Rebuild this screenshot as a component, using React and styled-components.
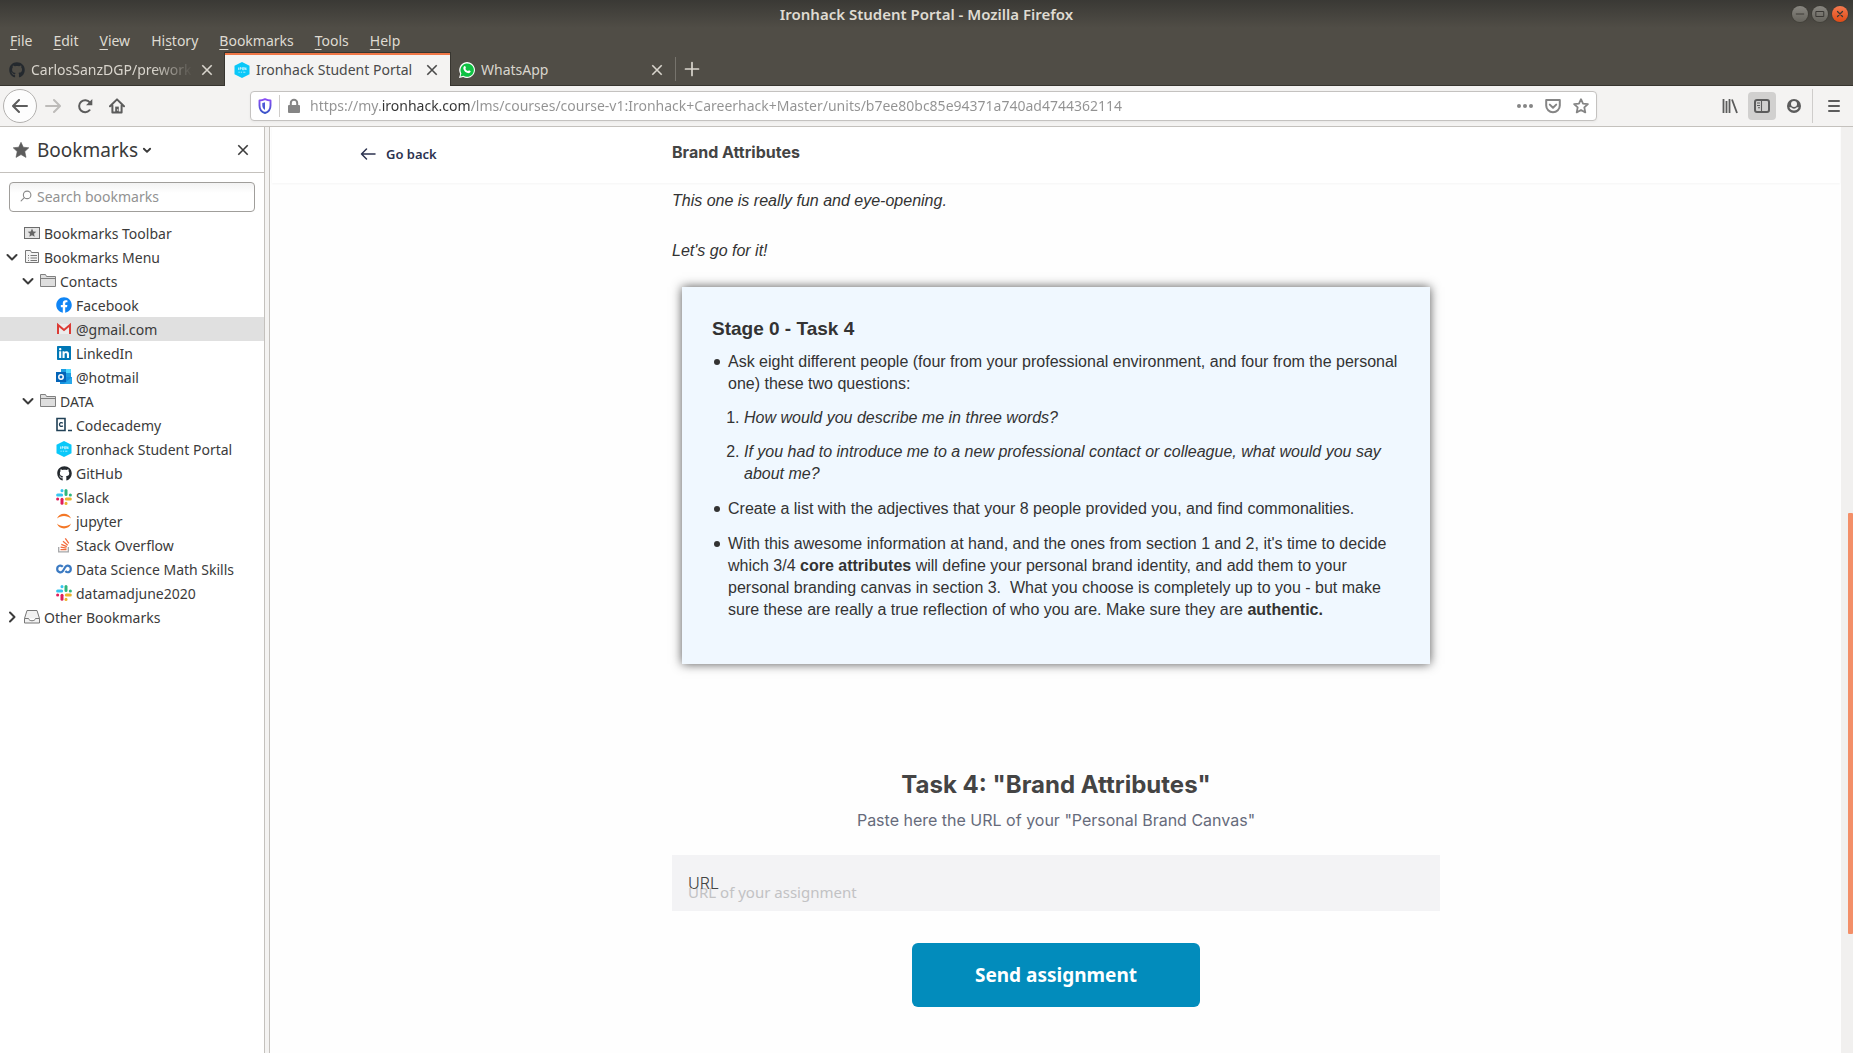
import React from "react";
import styled, { createGlobalStyle, css } from "styled-components";
import { FaGithub, FaFacebook, FaLinkedin } from "react-icons/fa";

const ui = `"Noto Sans", "Open Sans", sans-serif`;
const arial = `"Liberation Sans", Arial, sans-serif`;
const inter = `Inter, "Open Sans", sans-serif`;

const GlobalStyle = createGlobalStyle`
  *, *::before, *::after { box-sizing: border-box; }
  body { margin: 0; background: #fefefe; font-family: ${ui}; font-size: 14px; color: #3b3b3b; }
  button { font: inherit; color: inherit; background: none; border: 0; padding: 0; cursor: pointer; }
  a { color: inherit; text-decoration: none; }
  ul, ol { margin: 0; padding: 0; }
  svg { display: block; flex: none; }
`;

const Window = styled.div`
  display: flex;
  flex-direction: column;
  min-height: 100vh;
`;

const TitleBar = styled.header`
  display: grid;
  grid-template-columns: 1fr auto 1fr;
  align-items: center;
  height: 28px;
  padding: 0 5px;
  background: linear-gradient(#3a3935, #504d46);
  color: #dfdbd2;
`;

const WindowTitle = styled.h1`
  grid-column: 2;
  margin: 0;
  font-size: 15px;
  line-height: 20px;
  font-weight: 600;
`;

const WindowButtons = styled.div`
  display: flex;
  justify-content: flex-end;
  gap: 4px;
`;

const WindowButton = styled.button`
  display: grid;
  place-items: center;
  width: 16px;
  height: 16px;
  border-radius: 50%;
  color: #3a3834;
  box-shadow: 0 0 0 1px #38362f66;
  background: ${(p) => (p.$close ? "linear-gradient(#f4794f, #df4b16)" : "linear-gradient(#888680, #66645d)")};
`;

const MenuBar = styled.nav`
  display: flex;
  height: 25px;
  background: #504d46;
  color: #dfdbd2;
`;

const MenuItem = styled.button`
  padding: 0 11px 0 10px;
  line-height: 24px;
  u { text-underline-offset: 3px; }
`;

const TabStrip = styled.div`
  display: flex;
  height: 33px;
  background: #504d46;
  box-shadow: inset 0 -1px #37352f;
  color: #d9d5cd;
`;

const Tab = styled.div`
  display: flex;
  align-items: center;
  gap: 6px;
  width: 225px;
  padding: 0 10px 0 9px;
  ${(p) =>
    p.$active &&
    css`
      padding-bottom: 2px;
      background: #f4f3f2;
      color: #4a4a4a;
      border-top: 2px solid #f07746;
      box-shadow: 0 0 0 1px #37352f;
      clip-path: inset(-1px -1px 0 -1px);
    `}
`;

const TabLabel = styled.button`
  flex: 1;
  min-width: 0;
  overflow: hidden;
  white-space: nowrap;
  text-align: left;
  line-height: 24px;
  ${(p) => p.$fade && css`mask-image: linear-gradient(to right, #000 75%, transparent);`}
`;

const IconButton = styled.button`
  display: grid;
  place-items: center;
  flex: none;
  width: ${(p) => p.$size || 16}px;
  height: ${(p) => p.$size || 16}px;
  border-radius: 4px;
  background: ${(p) => (p.$on ? "#d1d0cf" : "none")};
`;

const NewTab = styled.button`
  display: grid;
  place-items: center;
  width: 33px;
  height: 24px;
  margin-top: 4px;
  border-left: 1px solid #76736c;
`;

const Toolbar = styled.div`
  display: flex;
  align-items: center;
  justify-content: space-between;
  height: 41px;
  padding: 0 5px 0 3px;
  background: #f4f3f2;
  border-bottom: 1px solid #c4c1bd;
  color: #5c5c5c;
`;

const ToolGroup = styled.div`
  display: flex;
  align-items: center;
  gap: 4px;
`;

const BackButton = styled.button`
  display: grid;
  place-items: center;
  width: 34px;
  height: 34px;
  margin-right: -2px;
  border: 1px solid #b3b1af;
  border-radius: 50%;
  background: #fdfdfd;
`;

const UrlBar = styled.form`
  display: flex;
  align-items: center;
  flex: 1;
  gap: 8px;
  height: 30px;
  margin: 0 119px;
  padding: 0 7px 0 6px;
  border: 1px solid #c4c2c0;
  border-radius: 4px;
  background: #fff;
  box-shadow: 0 1px 3px #0000000d;
  color: #858585;
`;

const Identity = styled.div`
  display: flex;
  align-items: center;
  gap: 6px;
`;

const PageActions = styled.div`
  display: flex;
  align-items: center;
  gap: 12px;
`;

const ThinRule = styled.span`
  width: 1px;
  height: ${(p) => p.$height}px;
  background: #cfcdcb;
`;

const MenuGroup = styled.div`
  display: flex;
  align-items: center;
  gap: 7px;
`;

const UrlInput = styled.input`
  flex: 1;
  min-width: 0;
  border: 0;
  padding: 0;
  outline: none;
  font-family: ${ui};
  font-size: 14px;
  line-height: 24px;
  color: transparent;
  caret-color: #333;
  background: linear-gradient(to right, #929292 72px, #333 72px 161px, #929292 161px);
  background-clip: text;
`;

const Body = styled.div`
  display: flex;
  flex: 1;
`;

const Sidebar = styled.aside`
  width: 265px;
  flex: none;
  background: #fff;
  border-right: 1px solid #c4c1bd;
`;

const SidebarHeader = styled.div`
  display: flex;
  align-items: center;
  justify-content: space-between;
  height: 46px;
  padding: 0 13px;
  border-bottom: 1px solid #c4c1bd;
`;

const SidebarSwitch = styled.button`
  display: flex;
  align-items: center;
  gap: 8px;
  font-size: 19px;
  line-height: 24px;
  color: #3a3a3a;
  svg:last-child { margin-left: -4px; }
`;

const SearchBox = styled.label`
  display: flex;
  align-items: center;
  gap: 5px;
  height: 30px;
  margin: 9px;
  padding: 0 10px 2px;
  border: 1px solid #a09e9b;
  border-radius: 4px;
  background: linear-gradient(#f3f3f3, #fff 10px);
  color: #8b8b8b;
  input {
    flex: 1;
    min-width: 0;
    border: 0;
    padding: 0;
    outline: none;
    background: none;
    font-family: ${ui};
    font-size: 14px;
    color: #333;
  }
  input::placeholder { color: #929292; opacity: 1; }
`;

const Tree = styled.ul`
  list-style: none;
`;

const rowStyle = css`
  display: flex;
  align-items: center;
  gap: 4px;
  width: 100%;
  height: 24px;
  padding-left: ${(p) => 4 + p.$level * 16}px;
  background: ${(p) => (p.$selected ? "#e0e0e0" : "transparent")};
  white-space: nowrap;
`;

const FolderRow = styled.button`${rowStyle}`;
const LinkRow = styled.a`${rowStyle}`;

const Slot = styled.span`
  display: grid;
  place-items: center;
  width: 16px;
  height: 16px;
  flex: none;
`;

const Splitter = styled.div`
  width: 5px;
  flex: none;
  background: #f4f3f2;
  border-right: 1px solid #c4c1bd;
`;

const Page = styled.main`
  flex: 1;
  min-width: 0;
  padding: 0 1px 0 2px;
  background: #fefefe;
`;

const PageHeader = styled.div`
  display: grid;
  grid-template-columns: 1fr minmax(0, 768px) 1fr;
  align-items: center;
  height: 56px;
  padding-bottom: 6px;
  background: #fff;
  box-shadow: 0 1px 2px #0000000a;
`;

const GoBack = styled.a`
  display: flex;
  align-items: center;
  gap: 10px;
  margin-left: 88px;
  padding-top: 3px;
  font-size: 13px;
  line-height: 24px;
  font-weight: 600;
  color: #2c3350;
`;

const PageTitle = styled.h2`
  margin: 0;
  font-family: ${inter};
  font-size: 16px;
  line-height: 24px;
  color: #444;
`;

const Column = styled.div`
  width: 100%;
  max-width: 768px;
  margin: 0 auto;
  padding-top: 7px;
  font-family: ${arial};
  font-size: 16px;
  line-height: 22px;
  color: #333;
`;

const Intro = styled.p`
  margin: 0;
  font-style: italic;
  & + & { margin-top: 28px; }
`;

const Card = styled.section`
  margin: 25px 10px 0;
  padding: 30px;
  background: #f0f8ff;
  box-shadow: 0 0 10px #555;
`;

const CardTitle = styled.h3`
  margin: 0 0 10px;
  font-size: 19px;
  line-height: 24px;
`;

const Bullets = styled.ul`
  padding-left: 16px;
  list-style: none;
  > li { margin-bottom: 13px; }
  > li::before {
    content: "";
    display: inline-block;
    width: 6px;
    height: 6px;
    margin: 0 8px 0 -14px;
    border-radius: 50%;
    background: #333;
    vertical-align: 2px;
  }
`;

const Questions = styled.ol`
  padding-left: 16px;
  font-style: italic;
  list-style: decimal;
  > li { margin-top: 12px; }
  > li::marker { font-style: normal; }
`;

const Assignment = styled.form`
  display: flex;
  flex-direction: column;
  align-items: center;
  margin-top: 105px;
  font-family: ${inter};
`;

const TaskTitle = styled.h2`
  margin: 0;
  font-size: 24px;
  line-height: 32px;
  color: #444;
`;

const TaskHint = styled.p`
  margin: 7px 0 23px;
  line-height: 24px;
  color: #666b7b;
`;

const Field = styled.div`
  position: relative;
  width: 100%;
  margin-bottom: 32px;
`;

const FieldLabel = styled.label`
  position: absolute;
  left: 16px;
  top: 16px;
  line-height: 24px;
  font-weight: 300;
  color: #444;
`;

const FieldInput = styled.input`
  display: block;
  width: 100%;
  height: 56px;
  padding: 18px 16px 0;
  border: 0;
  background: #f3f3f5;
  font-family: ${ui};
  font-size: 15px;
  color: #444;
  &::placeholder { color: #c2c2c4; opacity: 1; }
`;

const SendButton = styled.button`
  width: 288px;
  max-width: 100%;
  height: 64px;
  border-radius: 6px;
  background: #028cbc;
  color: #fff;
  font-family: ${ui};
  font-size: 19px;
  line-height: 28px;
  font-weight: 700;
`;

const ScrollTrack = styled.div`
  display: flex;
  flex-direction: column;
  align-items: flex-end;
  width: 12px;
  flex: none;
  background: #f1f0ef;
`;

const ScrollGap = styled.div`
  flex: ${(p) => p.$share};
`;

const ScrollThumb = styled.div`
  flex: 421;
  width: 5px;
  border-radius: 1px;
  background: #f38f68;
`;

const Stroke = ({ size = 16, w = 2, children, ...rest }) => (
  <svg width={size} height={size} viewBox="0 0 16 16" fill="none" stroke="currentColor" strokeWidth={w} strokeLinecap="round" strokeLinejoin="round" aria-hidden="true" {...rest}>
    {children}
  </svg>
);

const Cross = ({ size = 16 }) => <Stroke size={size} w={1.6} strokeLinecap="butt"><path d="M3.3 3.3l9.4 9.4M12.7 3.3l-9.4 9.4" /></Stroke>;
const ArrowLeft = () => <Stroke><path d="M15 8H1.5M7 2L1 8l6 6" /></Stroke>;
const ArrowRight = () => <Stroke stroke="#bdbbb9"><path d="M1 8h13.5M9 2l6 6-6 6" /></Stroke>;
const ThinArrow = () => <Stroke w={1.5}><path d="M15 8H1.5M6.5 3l-5 5 5 5" /></Stroke>;
const Reload = () => (
  <svg width="16" height="16" viewBox="0 0 16 16" aria-hidden="true">
    <path d="M12.6 12.2A6 6 0 1 1 12.8 4.4" fill="none" stroke="currentColor" strokeWidth="2" strokeLinecap="round" />
    <path d="M15.3 1v6.3H9z" fill="currentColor" />
  </svg>
);
const Home = () => (
  <svg width="16" height="16" viewBox="0 0 16 16" aria-hidden="true">
    <path d="M1 8.2L8 1.4l7 6.8M3.4 7.5v7h9.2v-7" fill="none" stroke="currentColor" strokeWidth="2" strokeLinecap="round" strokeLinejoin="round" />
    <path d="M6.2 14.5V8.6h3.6v5.9z" fill="currentColor" /><circle cx="8.6" cy="12" r=".8" fill="#f4f3f2" />
  </svg>
);
const Shield = () => (
  <svg width="16" height="16" viewBox="0 0 16 16" aria-hidden="true">
    <defs><linearGradient id="shield" x1="0" y1="0" x2="0" y2="1"><stop offset="0" stopColor="#8a4df5" /><stop offset="1" stopColor="#3a55c8" /></linearGradient></defs>
    <path d="M8 1.2C6 2.1 4 2.5 2.5 2.5v5c0 4.2 2.8 6.7 5.5 7.5 2.7-.8 5.5-3.3 5.5-7.5v-5C12 2.5 10 2.1 8 1.2z" fill="none" stroke="url(#shield)" strokeWidth="1.9" strokeLinejoin="round" />
    <path d="M8 4.3C7 4.7 6 5 5.3 5.1v2.5c0 2.3 1.3 3.7 2.7 4.4z" fill="#4c57d6" />
  </svg>
);
const Lock = () => (
  <svg width="16" height="16" viewBox="0 0 16 16" aria-hidden="true">
    <rect x="2" y="7" width="12" height="8" rx="1" fill="currentColor" />
    <path d="M4.8 7.5V5a3.2 3.2 0 0 1 6.400 0v2.500" fill="none" stroke="currentColor" strokeWidth="2" />
  </svg>
);
const Dots = () => <svg width="16" height="16" viewBox="0 0 16 16" fill="currentColor" aria-hidden="true"><circle cx="2" cy="8" r="2" /><circle cx="8" cy="8" r="2" /><circle cx="14" cy="8" r="2" /></svg>;
const Pocket = () => <Stroke><path d="M1.2 2h13.6v5.5a6.8 6.8 0 0 1-13.6 0z" /><path d="M4.8 6.6L8 9.7l3.2-3.1" /></Stroke>;
const StarOutline = () => <Stroke w={1.8}><path d="M8 1.2l2 4.4 4.9.5-3.6 3.3 1 5L8 12l-4.3 2.400 1-5L1.1 6.1l4.9-.5z" /></Stroke>;
const Star = ({ size = 16 }) => <svg width={size} height={size} viewBox="0 0 16 16" fill="#5c5c5c" aria-hidden="true"><path d="M8 .3l2.3 4.9 5.5.6-4 3.8 1.2 5.8L8 12.6l-5 2.8 1.2-5.8-4-3.8 5.5-.6z" stroke="#5c5c5c" strokeWidth=".6" strokeLinejoin="round" /></svg>;
const Library = () => <svg width="16" height="16" viewBox="0 0 16 16" fill="none" stroke="currentColor" strokeWidth="1.8" aria-hidden="true"><path d="M1.5 1v14M4.5 3v12M7.5 1v14M10 1.5L15 15" /></svg>;
const SidebarIcon = () => <svg width="16" height="16" viewBox="0 0 16 16" fill="none" stroke="currentColor" aria-hidden="true"><rect x="1" y="2" width="14" height="12" rx="2" strokeWidth="2" /><path d="M7.5 2v12M3 5h3M3 7.5h3M4 9.8h2" strokeWidth="1.1" /></svg>;
const Account = () => (
  <svg width="16" height="16" viewBox="0 0 16 16" aria-hidden="true">
    <circle cx="8" cy="8" r="7" fill="currentColor" />
    <circle cx="8" cy="6" r="3" fill="#f4f3f2" />
    <path d="M3.3 9.3h1.9c1 1.9 4.600 1.9 5.600 0h1.9c-1.4 4.3-8 4.3-9.4 0z" fill="#f4f3f2" />
  </svg>
);
const Burger = () => <Stroke><path d="M3 3h10M3 8h10M3 13h10" /></Stroke>;
const Plus = () => <Stroke w={1.7}><path d="M8 1.5v13M1.5 8h13" /></Stroke>;
const ChevronDown = () => <Stroke><path d="M3.5 6l4.5 4.5L12.5 6" /></Stroke>;
const ChevronSmall = () => <Stroke size={10} w={3}><path d="M3 6l5 5 5-5" /></Stroke>;
const ChevronRight = () => <Stroke><path d="M6 3.5L10.5 8 6 12.5" /></Stroke>;
const Magnifier = () => <Stroke size={12} w={1.5}><circle cx="9.5" cy="6.5" r="5" /><path d="M5.8 10.2L1.5 14.5" /></Stroke>;

const Ironhack = () => (
  <svg width="16" height="16" viewBox="0 0 16 16" aria-hidden="true">
    <path d="M8 0l7.5 3.8v8.4L8 16 .5 12.2V3.8z" fill="#0ac8f9" />
    <path d="M4.5 5.500v2.400M6 5.500v2.400M6 5.700h1.200v1.100H6M8.500 5.600h1.200v2.200H8.500zM10.800 7.900V5.500l1.200 2.400V5.500" fill="none" stroke="#e8fbff" strokeWidth=".7" />
    <path d="M4.500 10.200h1.200M6.800 10.200h1.300M9.200 10.200h2.200" stroke="#a5ecff" strokeWidth="1" />
  </svg>
);
const WhatsApp = () => (
  <svg width="16" height="16" viewBox="0 0 16 16" aria-hidden="true">
    <path d="M0 16l1.2-4.1A7.9 7.9 0 1 1 4.2 14.9z" fill="#fff" />
    <path d="M1.5 14.5l.9-3A6.700 6.700 0 1 1 4.500 13.700z" fill="#0fc143" />
    <path d="M5.3 4.2c.5-.3.9-.2 1.1.3l.5 1.2c.1.4-.6.9-.5 1.2.5 1 1.3 1.7 2.400 2.200.4.1.8-.9 1.2-.8l1.3.6c.4.2.4.5.3.9-.4 1.2-1.7 1.6-2.800 1.300C6.700 10.500 5.200 9 4.500 7.200c-.4-1.200-.1-2.400.8-3z" fill="#fff" />
  </svg>
);
const ToolbarFolder = () => <svg width="16" height="16" viewBox="0 0 16 16" aria-hidden="true"><rect x=".5" y="2.5" width="15" height="11" fill="#e4e4e4" stroke="#6c6c6c" /><path d="M8 3.6l1.3 2.8 3 .3-2.3 2 .7 3L8 10.2l-2.7 1.5.7-3-2.3-2 3-.3z" fill="#666" /></svg>;
const MenuFolder = () => <svg width="16" height="16" viewBox="0 0 16 16" fill="none" stroke="#777" aria-hidden="true"><path d="M1.5 13.5v-12h5l1 2h7v10z" fill="#f4f4f4" /><path d="M4 6.5h1M6.5 6.5H13M4 9h1M6.5 9H13M4 11.5h1M6.5 11.5H13" /></svg>;
const Folder = () => <svg width="16" height="16" viewBox="0 0 16 16" fill="#dedede" stroke="#808080" aria-hidden="true"><path d="M.5 13.5v-12h5l1 2h9v10zM.5 5.5h15" /></svg>;
const Tray = () => <svg width="16" height="16" viewBox="0 0 16 16" fill="#f1f1f1" stroke="#777" strokeLinejoin="round" aria-hidden="true"><path d="M.5 9.5l2.5-8h10l2.5 8v4.5H.5zM.5 9.5h4c.5 3 6.500 3 7 0h4" /></svg>;
const Gmail = () => <svg width="16" height="16" viewBox="0 0 16 16" aria-hidden="true"><path d="M2 3h12v10H2z" fill="#ececec" /><path d="M2 13V4l6 5 6-5v9" fill="none" stroke="#dc3b35" strokeWidth="2" /></svg>;
const Outlook = () => (
  <svg width="16" height="16" viewBox="0 0 16 16" aria-hidden="true">
    <path d="M5 0h10v8H5z" fill="#1b9de2" /><path d="M10 0h5v4h-5z" fill="#50d9ff" /><path d="M4 8h12v7H4z" fill="#1490df" /><path d="M16 8v7H8z" fill="#28a8ea" />
    <rect x="0" y="3" width="10" height="10" fill="#0364b8" /><circle cx="5" cy="8" r="2.2" fill="none" stroke="#fff" strokeWidth="1.5" />
  </svg>
);
const Codecademy = () => <svg width="16" height="16" viewBox="0 0 16 16" fill="none" stroke="#204056" aria-hidden="true"><path d="M1 1.5h8v12H1zM12 13.5h4" strokeWidth="1.6" /><path d="M6.8 6.2C5.5 4.9 3.5 5.7 3.5 7.5s2 2.600 3.300 1.300" strokeWidth="1.3" /></svg>;
const Slack = () => (
  <svg width="16" height="16" viewBox="0 0 16 16" strokeWidth="3" strokeLinecap="round" aria-hidden="true">
    <path d="M1.6 6h4" stroke="#36c5f0" /><path d="M6 1.6v.1" stroke="#36c5f0" />
    <path d="M10 1.6v4" stroke="#2eb67d" /><path d="M14.3 6h.1" stroke="#2eb67d" />
    <path d="M10.3 10h4" stroke="#ecb22e" /><path d="M10 14.3v.1" stroke="#ecb22e" />
    <path d="M6 10.3v4" stroke="#e01e5a" /><path d="M1.6 10h.1" stroke="#e01e5a" />
  </svg>
);
const Jupyter = () => <svg width="16" height="16" viewBox="0 0 16 16" fill="#f37726" aria-hidden="true"><path d="M1 5.5C3-1 13-1 15 5.5 11.5 2 4.5 2 1 5.5zM1 10.5C3 17 13 17 15 10.5 11.5 14 4.5 14 1 10.5z" /></svg>;
const StackOverflow = () => <svg width="16" height="16" viewBox="0 0 16 16" fill="none" strokeWidth="1.3" aria-hidden="true"><path d="M2.7 10v4.8h9.6V10" stroke="#a5a6a8" /><path d="M4.5 12.6h6M4.6 10.2l5.9.9M5.3 7.4l5.5 2.3M7 4.3l4.7 3.9M9.3 1.3l3.5 5" stroke="#f26b3c" /></svg>;
const Coursera = () => <svg width="16" height="16" viewBox="0 0 16 16" fill="none" stroke="#3b7ac2" strokeWidth="2.2" aria-hidden="true"><path d="M6.8 5.8C5 3.6 1.2 4.6 1.2 8s4 4.3 5.7 2L9.3 6C11 3.7 14.8 4.6 14.8 8s-3.6 4.2-5.4 2" /></svg>;

const bookmarks = [
  { level: 0, icon: <ToolbarFolder />, label: "Bookmarks Toolbar", folder: true },
  { level: 0, icon: <MenuFolder />, label: "Bookmarks Menu", folder: true, open: true },
  { level: 1, icon: <Folder />, label: "Contacts", folder: true, open: true },
  { level: 2, icon: <FaFacebook size={16} color="#1085f5" />, label: "Facebook" },
  { level: 2, icon: <Gmail />, label: "@gmail.com", selected: true },
  { level: 2, icon: <FaLinkedin size={16} color="#0077b5" />, label: "LinkedIn" },
  { level: 2, icon: <Outlook />, label: "@hotmail" },
  { level: 1, icon: <Folder />, label: "DATA", folder: true, open: true },
  { level: 2, icon: <Codecademy />, label: "Codecademy" },
  { level: 2, icon: <Ironhack />, label: "Ironhack Student Portal" },
  { level: 2, icon: <FaGithub size={15} color="#24292e" />, label: "GitHub" },
  { level: 2, icon: <Slack />, label: "Slack" },
  { level: 2, icon: <Jupyter />, label: "jupyter" },
  { level: 2, icon: <StackOverflow />, label: "Stack Overflow" },
  { level: 2, icon: <Coursera />, label: "Data Science Math Skills" },
  { level: 2, icon: <Slack />, label: "datamadjune2020" },
  { level: 0, icon: <Tray />, label: "Other Bookmarks", folder: true, open: false },
];

function BookmarkRow({ item }) {
  const Row = item.folder ? FolderRow : LinkRow;
  return (
    <li>
      <Row $level={item.level} $selected={item.selected} href={item.folder ? undefined : "#"} aria-expanded={item.open}>
        <Slot>{item.open === true ? <ChevronDown /> : item.open === false ? <ChevronRight /> : null}</Slot>
        <Slot>{item.icon}</Slot>
        {item.label}
      </Row>
    </li>
  );
}

const menus = [["", "F", "ile"], ["", "E", "dit"], ["", "V", "iew"], ["Hi", "s", "tory"], ["", "B", "ookmarks"], ["", "T", "ools"], ["", "H", "elp"]];

export default function App() {
  return (
    <Window>
      <GlobalStyle />
      <TitleBar>
        <WindowTitle>Ironhack Student Portal - Mozilla Firefox</WindowTitle>
        <WindowButtons>
          <WindowButton aria-label="Minimize"><Stroke size={10} w={1.5}><path d="M2 8h12" /></Stroke></WindowButton>
          <WindowButton aria-label="Maximize"><Stroke size={10} w={1.6}><path d="M2 4h12v8H2z" /></Stroke></WindowButton>
          <WindowButton $close aria-label="Close window"><Stroke size={10}><path d="M4 4l8 8M12 4l-8 8" /></Stroke></WindowButton>
        </WindowButtons>
      </TitleBar>
      <MenuBar aria-label="Menu">
        {menus.map(([a, key, b]) => <MenuItem key={key + b}>{a}<u>{key}</u>{b}</MenuItem>)}
      </MenuBar>
      <TabStrip>
        <Tab>
          <FaGithub size={16} color="#24292e" />
          <TabLabel $fade>CarlosSanzDGP/prework-data</TabLabel>
          <IconButton aria-label="Close tab"><Cross /></IconButton>
        </Tab>
        <Tab $active>
          <Ironhack />
          <TabLabel>Ironhack Student Portal</TabLabel>
          <IconButton aria-label="Close tab"><Cross /></IconButton>
        </Tab>
        <Tab>
          <WhatsApp />
          <TabLabel>WhatsApp</TabLabel>
          <IconButton aria-label="Close tab"><Cross /></IconButton>
        </Tab>
        <NewTab aria-label="New tab"><Plus /></NewTab>
      </TabStrip>
      <Toolbar>
        <ToolGroup>
          <BackButton aria-label="Back"><ArrowLeft /></BackButton>
          <IconButton $size={28} aria-label="Forward"><ArrowRight /></IconButton>
          <IconButton $size={28} aria-label="Reload"><Reload /></IconButton>
          <IconButton $size={28} aria-label="Home"><Home /></IconButton>
        </ToolGroup>
        <UrlBar>
          <Identity>
            <Shield />
            <ThinRule $height={22} />
            <Lock />
          </Identity>
          <UrlInput aria-label="Address" defaultValue="https://my.ironhack.com/lms/courses/course-v1:Ironhack+Careerhack+Master/units/b7ee80bc85e94371a740ad4744362114" />
          <PageActions>
            <IconButton type="button" aria-label="Page actions"><Dots /></IconButton>
            <IconButton type="button" aria-label="Save to Pocket"><Pocket /></IconButton>
            <IconButton type="button" aria-label="Bookmark this page"><StarOutline /></IconButton>
          </PageActions>
        </UrlBar>
        <ToolGroup>
          <IconButton $size={28} aria-label="Library"><Library /></IconButton>
          <IconButton $size={28} $on aria-label="Sidebars"><SidebarIcon /></IconButton>
          <IconButton $size={28} aria-label="Account"><Account /></IconButton>
          <MenuGroup>
            <ThinRule $height={34} />
            <IconButton $size={28} aria-label="Open menu"><Burger /></IconButton>
          </MenuGroup>
        </ToolGroup>
      </Toolbar>
      <Body>
        <Sidebar>
          <SidebarHeader>
            <SidebarSwitch><Star />Bookmarks<ChevronSmall /></SidebarSwitch>
            <IconButton aria-label="Close sidebar"><Cross /></IconButton>
          </SidebarHeader>
          <SearchBox>
            <Magnifier />
            <input aria-label="Search bookmarks" placeholder="Search bookmarks" />
          </SearchBox>
          <Tree>
            {bookmarks.map((item) => <BookmarkRow key={item.label} item={item} />)}
          </Tree>
        </Sidebar>
        <Splitter />
        <Page>
          <PageHeader>
            <GoBack href="#"><ThinArrow />Go back</GoBack>
            <PageTitle>Brand Attributes</PageTitle>
          </PageHeader>
          <Column>
            <Intro>This one is really fun and eye-opening.</Intro>
            <Intro>Let's go for it!</Intro>
            <Card>
              <CardTitle>Stage 0 - Task 4</CardTitle>
              <Bullets>
                <li>
                  Ask eight different people (four from your professional environment, and four from the personal one) these two questions:
                  <Questions>
                    <li>How would you describe me in three words?</li>
                    <li>If you had to introduce me to a new professional contact or colleague, what would you say about me?</li>
                  </Questions>
                </li>
                <li>Create a list with the adjectives that your 8 people provided you, and find commonalities.</li>
                <li>
                  With this awesome information at hand, and the ones from section 1 and 2, it's time to decide which 3/4 <strong>core attributes</strong> will define your personal brand identity, and add them to your personal branding canvas in section 3.&nbsp; What you choose is completely up to you - but make sure these are really a true reflection of who you are. Make sure they are <strong>authentic.</strong>
                </li>
              </Bullets>
            </Card>
            <Assignment>
              <TaskTitle>Task 4: "Brand Attributes"</TaskTitle>
              <TaskHint>Paste here the URL of your "Personal Brand Canvas"</TaskHint>
              <Field>
                <FieldInput id="assignment-url" placeholder="URL of your assignment" />
                <FieldLabel htmlFor="assignment-url">URL</FieldLabel>
              </Field>
              <SendButton type="button">Send assignment</SendButton>
            </Assignment>
          </Column>
        </Page>
        <ScrollTrack>
          <ScrollGap $share={386} />
          <ScrollThumb />
          <ScrollGap $share={119} />
        </ScrollTrack>
      </Body>
    </Window>
  );
}
